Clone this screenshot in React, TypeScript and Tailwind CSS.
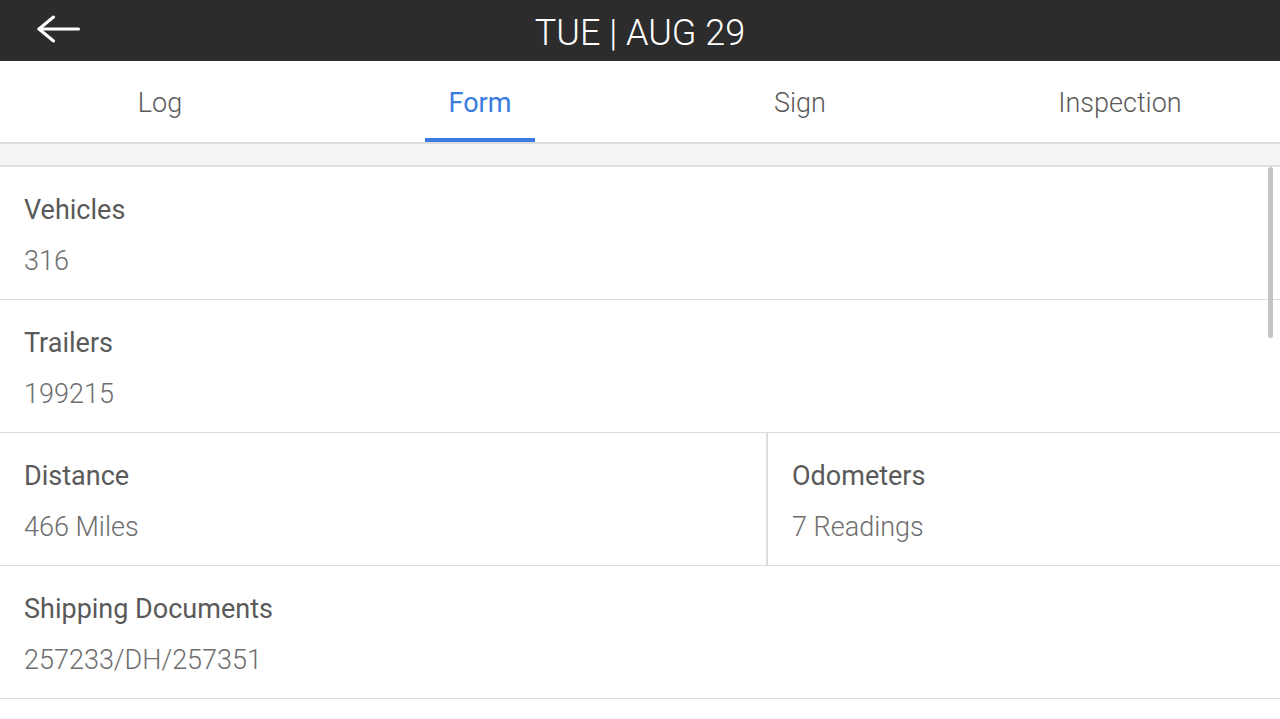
const TABS = ['Log', 'Form', 'Sign', 'Inspection'];
const ACTIVE = 'Form';

function Field({ label, value }: { label: string; value: string }) {
  return (
    <div className="flex h-[132px] flex-col justify-center px-6 pt-[4px]">
      <p className="text-[27px] leading-[34px] text-[#5a5a5a]">{label}</p>
      <p className="mt-[17px] text-[27px] font-light leading-[34px] text-[#6e6e6e]">{value}</p>
    </div>
  );
}

export default function App() {
  return (
    <div className="flex h-[719px] w-[1280px] flex-col overflow-hidden bg-white font-['Roboto',sans-serif]">
      <header className="relative flex h-[61px] shrink-0 items-center justify-center bg-[#2c2c2c]">
        <button className="absolute left-[37px] top-[15px] text-white">
          <svg width="44" height="28" viewBox="0 0 44 28" fill="none" stroke="currentColor" strokeWidth="3" strokeLinecap="round" strokeLinejoin="round">
            <path d="M2 14H41.5" />
            <path d="M16.5 2L2 14L16.5 26" />
          </svg>
        </button>
        <h1 className="pt-[5px] text-[36px] font-light leading-none text-white">TUE | AUG 29</h1>
      </header>

      <nav className="grid h-[83px] shrink-0 grid-cols-4 border-b-2 border-[#dcdcdc]">
        {TABS.map((t) => (
          <div key={t} className="relative flex items-center justify-center pt-[4px]">
            <span
              className={
                t === ACTIVE
                  ? 'text-[27px] text-[#3a7be0]'
                  : 'text-[27px] font-light text-[#5a5a5a]'
              }
            >
              {t}
            </span>
            {t === ACTIVE && (
              <span className="absolute bottom-0 left-[105px] h-[4px] w-[110px] bg-[#3a7be0]" />
            )}
          </div>
        ))}
      </nav>

      <div className="h-[23px] shrink-0 border-b-2 border-[#dedede] bg-[#f4f4f4]" />

      <div className="relative flex-1">
        <div className="border-b border-[#dddddd]">
          <Field label="Vehicles" value="316" />
        </div>
        <div className="border-b border-[#dddddd]">
          <Field label="Trailers" value="199215" />
        </div>
        <div className="grid grid-cols-[768px_1fr] border-b border-[#dddddd]">
          <div className="border-r-2 border-[#dddddd]">
            <Field label="Distance" value="466 Miles" />
          </div>
          <Field label="Odometers" value="7 Readings" />
        </div>
        <div className="border-b border-[#dddddd]">
          <Field label="Shipping Documents" value="257233/DH/257351" />
        </div>
        <span className="absolute right-[7px] top-0 h-[171px] w-[5px] rounded-full bg-[#c4c4c4]" />
      </div>
    </div>
  );
}
